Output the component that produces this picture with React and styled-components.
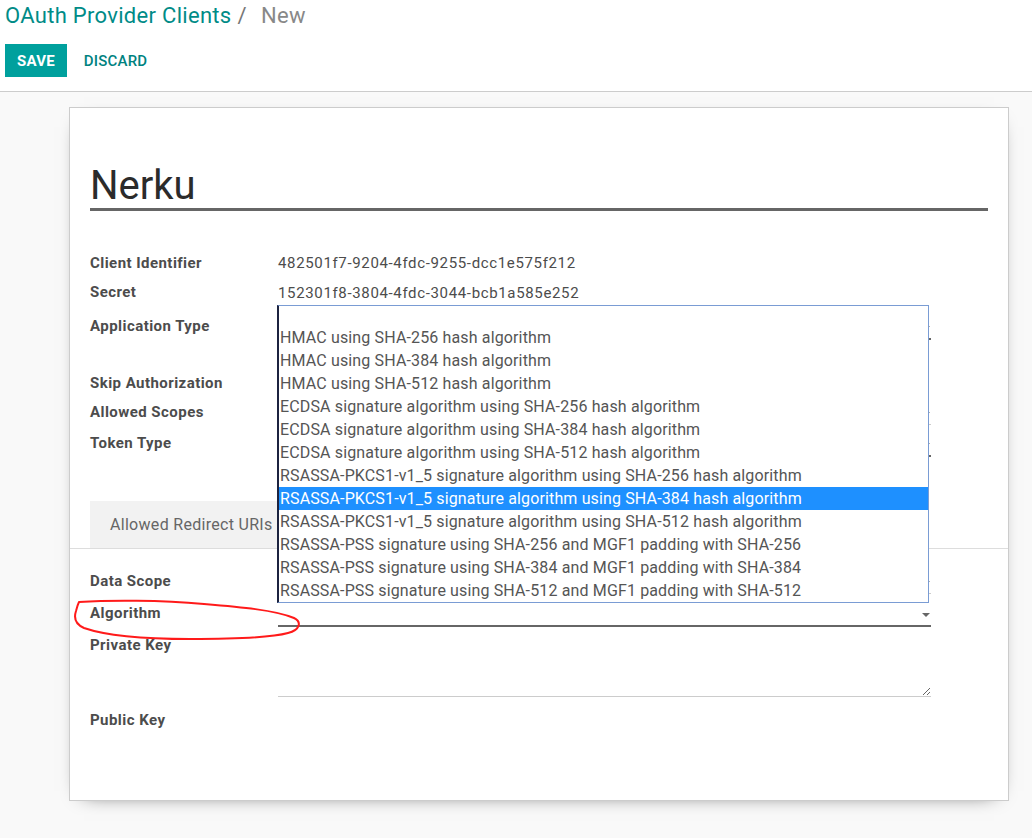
import React from "react";
import styled, { createGlobalStyle } from "styled-components";

const GlobalStyle = createGlobalStyle`
  body {
    margin: 0;
    background: #f9f9f9;
    font-family: Roboto, "Liberation Sans", sans-serif;
    color: #4c4c4c;
  }
`;

const ControlPanel = styled.div`
  background: #fff;
  border-bottom: 1px solid #ccc;
  padding: 3px 5px 14px;
`;

const Breadcrumb = styled.div`
  font-size: 22px;
  line-height: 26px;
  height: 26px;
  letter-spacing: 0.3px;
  white-space: nowrap;
`;

const Crumb = styled.span`
  color: #008b87;
`;

const Divider = styled.span`
  color: #777;
  padding: 0 14px 0 6px;
`;

const Current = styled.span`
  color: #888;
`;

const ButtonBar = styled.div`
  display: flex;
  align-items: center;
  gap: 5px;
  margin-top: 15px;
`;

const Button = styled.button`
  height: 33px;
  padding: 0 12px;
  border: none;
  font-family: Roboto, "Liberation Sans", sans-serif;
  font-size: 15px;
  letter-spacing: 0.2px;
  text-transform: uppercase;
  cursor: pointer;
  background: ${(p) => (p.$primary ? "#00a09d" : "transparent")};
  color: ${(p) => (p.$primary ? "#fff" : "#00827f")};
  font-weight: ${(p) => (p.$primary ? 700 : 500)};
`;

const Content = styled.div`
  padding: 15px 0 30px 69px;
`;

const Sheet = styled.div`
  position: relative;
  box-sizing: border-box;
  width: 940px;
  min-height: 694px;
  background: #fff;
  border: 1px solid #ccc;
  box-shadow: 0 5px 20px -15px #000;
  padding: 56px 20px 0;
`;

const Title = styled.div`
  font-size: 40px;
  line-height: 44px;
  color: #2b2b2b;
  border-bottom: 3px solid #666;
`;

const FieldGrid = styled.div`
  display: grid;
  grid-template-columns: 188px 653px;
  margin-top: ${(p) => p.$top}px;
`;

const Label = styled.div`
  height: ${(p) => p.$h}px;
  font-size: 15px;
  line-height: 20px;
  font-weight: 700;
  letter-spacing: 0.45px;
  color: #4c4c4c;
  white-space: nowrap;
`;

const Value = styled.div`
  height: ${(p) => p.$h}px;
  font-size: 15px;
  line-height: 20px;
  letter-spacing: 0.65px;
  color: #4c4c4c;
  margin-top: ${(p) => p.$shift || 0}px;
`;

const FieldCell = styled.div`
  height: ${(p) => p.$h}px;
  position: relative;
`;

const Select = styled.div`
  position: relative;
  height: 22px;
  border-bottom: ${(p) => (p.$strong ? "2px solid #666" : "1px solid #ccc")};
  &::after {
    content: "";
    position: absolute;
    right: 1px;
    top: 10px;
    border-left: 4px solid transparent;
    border-right: 4px solid transparent;
    border-top: 4px solid #666;
  }
`;

const TextArea = styled.textarea`
  display: block;
  box-sizing: border-box;
  width: 653px;
  height: 62px;
  border: none;
  border-bottom: 1px solid #ccc;
  outline: none;
  font-family: Roboto, "Liberation Sans", sans-serif;
  font-size: 15px;
  color: #4c4c4c;
  background: transparent;
`;

const Tabs = styled.div`
  display: flex;
  margin: ${(p) => p.$top}px -20px 0;
  padding-left: 20px;
  border-bottom: 1px solid #ddd;
`;

const Tab = styled.div`
  height: 47px;
  padding: 0 20px;
  display: flex;
  align-items: center;
  font-size: 16px;
  letter-spacing: 0.3px;
  color: #666;
  background: ${(p) => (p.$active ? "#f2f2f2" : "transparent")};
`;

const Dropdown = styled.ul`
  position: absolute;
  left: -1px;
  bottom: 100%;
  width: 649px;
  margin: 0;
  padding: 0;
  list-style: none;
  background: #fff;
  border: 1px solid #7a9cd4;
  border-left: 2px solid #1c2340;
  z-index: 5;
`;

const Option = styled.li`
  height: ${(p) => (p.$blank ? 20 : 23)}px;
  line-height: 23px;
  padding-left: 1px;
  font-size: 16px;
  letter-spacing: 0.14px;
  white-space: nowrap;
  color: ${(p) => (p.$selected ? "#fff" : "#555")};
  background: ${(p) => (p.$selected ? "#1e90ff" : "transparent")};
`;

const Annotation = styled.svg`
  position: absolute;
  left: 0;
  top: 485px;
  pointer-events: none;
`;

const algorithms = [
  "HMAC using SHA-256 hash algorithm",
  "HMAC using SHA-384 hash algorithm",
  "HMAC using SHA-512 hash algorithm",
  "ECDSA signature algorithm using SHA-256 hash algorithm",
  "ECDSA signature algorithm using SHA-384 hash algorithm",
  "ECDSA signature algorithm using SHA-512 hash algorithm",
  "RSASSA-PKCS1-v1_5 signature algorithm using SHA-256 hash algorithm",
  "RSASSA-PKCS1-v1_5 signature algorithm using SHA-384 hash algorithm",
  "RSASSA-PKCS1-v1_5 signature algorithm using SHA-512 hash algorithm",
  "RSASSA-PSS signature using SHA-256 and MGF1 padding with SHA-256",
  "RSASSA-PSS signature using SHA-384 and MGF1 padding with SHA-384",
  "RSASSA-PSS signature using SHA-512 and MGF1 padding with SHA-512",
];

export default function App() {
  return (
    <>
      <GlobalStyle />
      <ControlPanel>
        <Breadcrumb>
          <Crumb>OAuth Provider Clients</Crumb>
          <Divider>/</Divider>
          <Current>New</Current>
        </Breadcrumb>
        <ButtonBar>
          <Button $primary>Save</Button>
          <Button>Discard</Button>
        </ButtonBar>
      </ControlPanel>

      <Content>
        <Sheet>
          <Title>Nerku</Title>

          <FieldGrid $top={42}>
            <Label $h={29}>Client Identifier</Label>
            <Value $h={29}>482501f7-9204-4fdc-9255-dcc1e575f212</Value>

            <Label $h={33}>Secret</Label>
            <Value $h={33} $shift={1}>152301f8-3804-4fdc-3044-bcb1a585e252</Value>

            <Label $h={57}>Application Type</Label>
            <FieldCell $h={57}>
              <Select $strong />
            </FieldCell>

            <Label $h={29}>Skip Authorization</Label>
            <FieldCell $h={29} />

            <Label $h={31}>Allowed Scopes</Label>
            <FieldCell $h={31}>
              <Select />
            </FieldCell>

            <Label $h={31}>Token Type</Label>
            <FieldCell $h={31}>
              <Select $strong />
            </FieldCell>
          </FieldGrid>

          <Tabs $top={37}>
            <Tab $active>Allowed Redirect URIs</Tab>
          </Tabs>

          <FieldGrid $top={22}>
            <Label $h={32}>Data Scope</Label>
            <FieldCell $h={32}>
              <Select />
            </FieldCell>

            <Label $h={32}>Algorithm</Label>
            <FieldCell $h={32}>
              <Select $strong>
                <Dropdown>
                  <Option $blank />
                  {algorithms.map((a, i) => (
                    <Option key={a} $selected={i === 7}>
                      {a}
                    </Option>
                  ))}
                </Dropdown>
              </Select>
            </FieldCell>

            <Label $h={75}>Private Key</Label>
            <FieldCell $h={75}>
              <TextArea />
            </FieldCell>

            <Label $h={20}>Public Key</Label>
            <FieldCell $h={20} />
          </FieldGrid>

          <Annotation width="240" height="60" viewBox="0 0 240 60">
            <path
              d="M9 9 C 40 7, 90 7, 134 11 C 170 14, 205 17, 224 25 C 232 29, 230 37, 218 40 C 200 45, 168 46, 120 46 C 80 46, 40 44, 14 35 C 5 31, 4 24, 6 18 C 7 14, 8 11, 9 9"
              fill="none"
              stroke="#ff1a1a"
              strokeWidth="2"
              strokeLinecap="round"
            />
          </Annotation>
        </Sheet>
      </Content>
    </>
  );
}
